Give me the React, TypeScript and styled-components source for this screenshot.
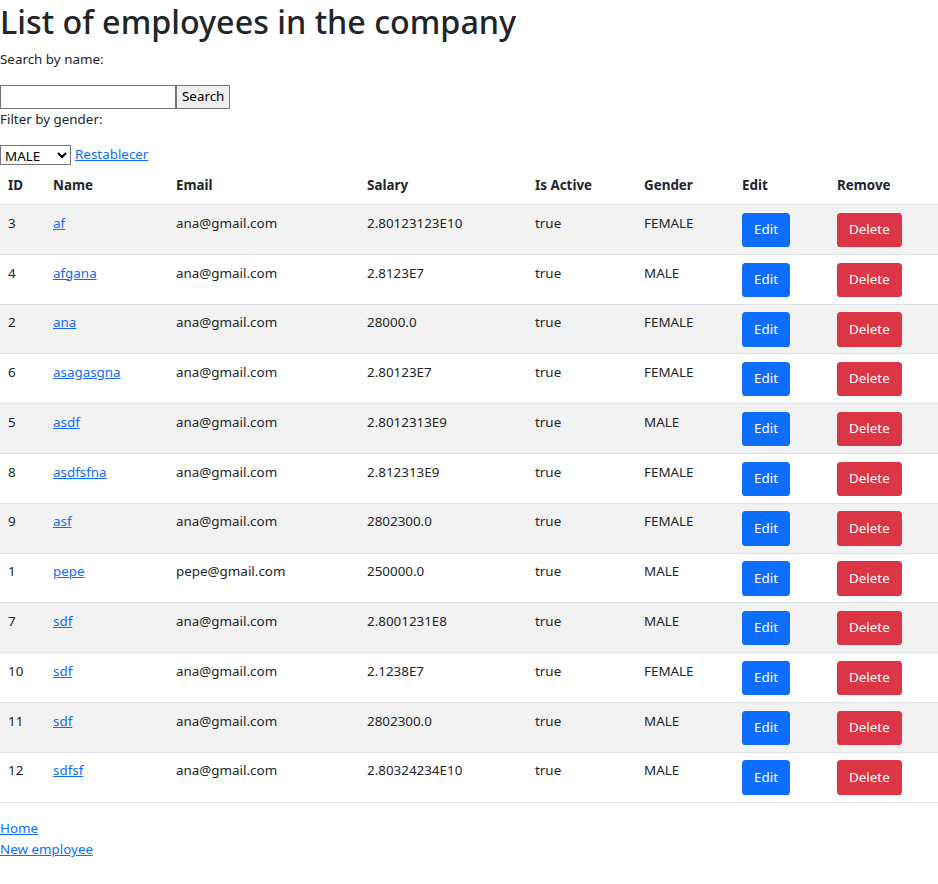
import React from "react";
import styled, { createGlobalStyle } from "styled-components";

const Global = createGlobalStyle`
  html, body { margin: 0; padding: 0; background: #fff; }
  body {
    font-family: "Noto Sans", "Open Sans", sans-serif;
    font-size: 13.4px;
    line-height: 21.6px;
    color: #212529;
  }
  * { box-sizing: border-box; }
`;

const Title = styled.h1`
  margin: 0 0 7.2px;
  font-size: 32.3px;
  font-weight: 500;
  line-height: 42px;
`;

const Para = styled.p`
  margin: 0 0 14.4px;
`;

const SearchForm = styled.form`
  display: flex;
  margin: 0;
`;

const TextInput = styled.input`
  width: 176px;
  height: 24px;
  border: 1px solid #767676;
  padding: 1px 2px;
  font: inherit;
  margin: 0;
`;

const PlainButton = styled.button`
  height: 24px;
  border: 1px solid #767676;
  background: #efefef;
  font: inherit;
  color: #000;
  padding: 0 5px;
  margin: 0;
  line-height: 1;
`;

const FilterRow = styled.div`
  display: flex;
  align-items: center;
  gap: 4px;
  height: 20px;
  margin: 0;
`;

const Select = styled.select`
  width: 71px;
  height: 20px;
  font: inherit;
  font-size: 13.4px;
  border: 1px solid #767676;
  background: #fff;
  color: #000;
  padding: 0;
`;

const Link = styled.a`
  color: #0d6efd;
  text-decoration: underline;
`;

const Table = styled.table`
  width: 100%;
  table-layout: fixed;
  border-collapse: collapse;
  margin-top: 3px;
  margin-bottom: 15.4px;
`;

const Th = styled.th<{ $w: number }>`
  width: ${(p) => p.$w}px;
  text-align: left;
  font-weight: 700;
  padding: 7.2px 7.2px 7.2px 8px;
  border-bottom: 1px solid #dee2e6;
  vertical-align: bottom;
`;

const Tr = styled.tr<{ $odd: boolean }>`
  background: ${(p) => (p.$odd ? "#f2f2f2" : "#fff")};
`;

const Td = styled.td`
  padding: 7.6px 7.2px 6.8px 8px;
  vertical-align: top;
  border-bottom: 1px solid #dee2e6;
  white-space: nowrap;
`;

const ActionButton = styled.button<{ $variant: "primary" | "danger" }>`
  height: 34.4px;
  padding: 0 12px;
  border: none;
  border-radius: 3.6px;
  font: inherit;
  color: #fff;
  background: ${(p) => (p.$variant === "primary" ? "#0d6efd" : "#dc3545")};
  cursor: pointer;
`;

const FooterLinks = styled.div`
  display: flex;
  flex-direction: column;
  align-items: flex-start;
`;

const rows = [
  [3, "af", "ana@gmail.com", "2.80123123E10", "FEMALE"],
  [4, "afgana", "ana@gmail.com", "2.8123E7", "MALE"],
  [2, "ana", "ana@gmail.com", "28000.0", "FEMALE"],
  [6, "asagasgna", "ana@gmail.com", "2.80123E7", "FEMALE"],
  [5, "asdf", "ana@gmail.com", "2.8012313E9", "MALE"],
  [8, "asdfsfna", "ana@gmail.com", "2.812313E9", "FEMALE"],
  [9, "asf", "ana@gmail.com", "2802300.0", "FEMALE"],
  [1, "pepe", "pepe@gmail.com", "250000.0", "MALE"],
  [7, "sdf", "ana@gmail.com", "2.8001231E8", "MALE"],
  [10, "sdf", "ana@gmail.com", "2.1238E7", "FEMALE"],
  [11, "sdf", "ana@gmail.com", "2802300.0", "MALE"],
  [12, "sdfsf", "ana@gmail.com", "2.80324234E10", "MALE"],
] as const;

const cols: [string, number][] = [
  ["ID", 45],
  ["Name", 123],
  ["Email", 191],
  ["Salary", 168],
  ["Is Active", 109],
  ["Gender", 98],
  ["Edit", 95],
  ["Remove", 109],
];

export default function App() {
  return (
    <>
      <Global />
      <Title>List of employees in the company</Title>
      <Para>Search by name:</Para>
      <SearchForm onSubmit={(e) => e.preventDefault()}>
        <TextInput type="text" />
        <PlainButton type="submit">Search</PlainButton>
      </SearchForm>
      <Para>Filter by gender:</Para>
      <FilterRow>
        <Select defaultValue="MALE">
          <option value="MALE">MALE</option>
          <option value="FEMALE">FEMALE</option>
        </Select>
        <Link href="#">Restablecer</Link>
      </FilterRow>
      <Table>
        <thead>
          <tr>
            {cols.map(([c, w]) => (
              <Th key={c} $w={w}>
                {c}
              </Th>
            ))}
          </tr>
        </thead>
        <tbody>
          {rows.map(([id, name, email, salary, gender], i) => (
            <Tr key={i} $odd={i % 2 === 0}>
              <Td>{id}</Td>
              <Td>
                <Link href="#">{name}</Link>
              </Td>
              <Td>{email}</Td>
              <Td>{salary}</Td>
              <Td>true</Td>
              <Td>{gender}</Td>
              <Td>
                <ActionButton $variant="primary">Edit</ActionButton>
              </Td>
              <Td>
                <ActionButton $variant="danger">Delete</ActionButton>
              </Td>
            </Tr>
          ))}
        </tbody>
      </Table>
      <FooterLinks>
        <Link href="#">Home</Link>
        <Link href="#">New employee</Link>
      </FooterLinks>
    </>
  );
}
